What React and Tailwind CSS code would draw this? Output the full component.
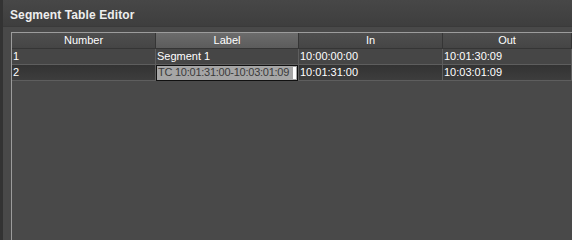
import React from "react";

const rows = [
  { num: "1", label: "Segment 1", tcIn: "10:00:00:00", tcOut: "10:01:30:09" },
  { num: "2", label: "TC 10:01:31:00-10:03:01:09", tcIn: "10:01:31:00", tcOut: "10:03:01:09", editing: true },
];

function HeaderCell({ children, active }) {
  return (
    <div
      className={`h-[16px] flex items-center justify-center border-r border-b border-[#353535] ${
        active
          ? "bg-gradient-to-b from-[#6c6c6c] to-[#5c5c5c]"
          : "bg-gradient-to-b from-[#4e4e4e] to-[#454545]"
      }`}
    >
      {children}
    </div>
  );
}

export default function App() {
  return (
    <div
      className="w-[572px] h-[240px] bg-[#494949] flex overflow-hidden text-white"
      style={{ fontFamily: "'Liberation Sans', Arial, sans-serif" }}
    >
      <div className="w-[3px] bg-[#333333] shrink-0" />
      <div className="flex-1 flex flex-col min-w-0">
        {/* Title bar */}
        <div className="h-[27px] bg-gradient-to-b from-[#474747] to-[#3e3e3e] flex items-center pl-[7px] pt-[4px] border-b border-[#3a3a3a]">
          <span className="text-[12px] font-bold text-[#eeeeee] tracking-[0.1px]">Segment Table Editor</span>
        </div>

        {/* Table */}
        <div className="mt-[5px] ml-[8px] flex-1 border-l border-t border-[#9c9c9c] text-[11px] leading-none">
          <div className="grid grid-cols-[144px_143px_144px_1fr]">
            <HeaderCell>Number</HeaderCell>
            <HeaderCell active>Label</HeaderCell>
            <HeaderCell>In</HeaderCell>
            <HeaderCell>Out</HeaderCell>

            {rows.map((r) => {
              const bg = r.editing
                ? "bg-gradient-to-b from-[#333333] to-[#3d3d3d]"
                : "bg-[#464646]";
              const cell = `h-[16px] flex items-center pl-[1px] border-r border-b border-[#5e5e5e] ${bg}`;
              return (
                <React.Fragment key={r.num}>
                  <div className={cell}>{r.num}</div>
                  <div className={cell + " !pl-0"}>
                    {r.editing ? (
                      <div className="h-[16px] w-[142px] bg-[#a6a6a6] border border-[#111111] text-[#3a3a3a] flex items-center pl-[1px] relative overflow-hidden whitespace-nowrap">
                        <span className="tracking-[-0.25px]">{r.label}</span>
                        <span className="absolute right-[1px] top-[1px] w-[3px] h-[12px] bg-white" />
                      </div>
                    ) : (
                      <span className="pl-[1px]">{r.label}</span>
                    )}
                  </div>
                  <div className={cell}>{r.tcIn}</div>
                  <div className={cell}>{r.tcOut}</div>
                </React.Fragment>
              );
            })}
          </div>
        </div>
      </div>
    </div>
  );
}
